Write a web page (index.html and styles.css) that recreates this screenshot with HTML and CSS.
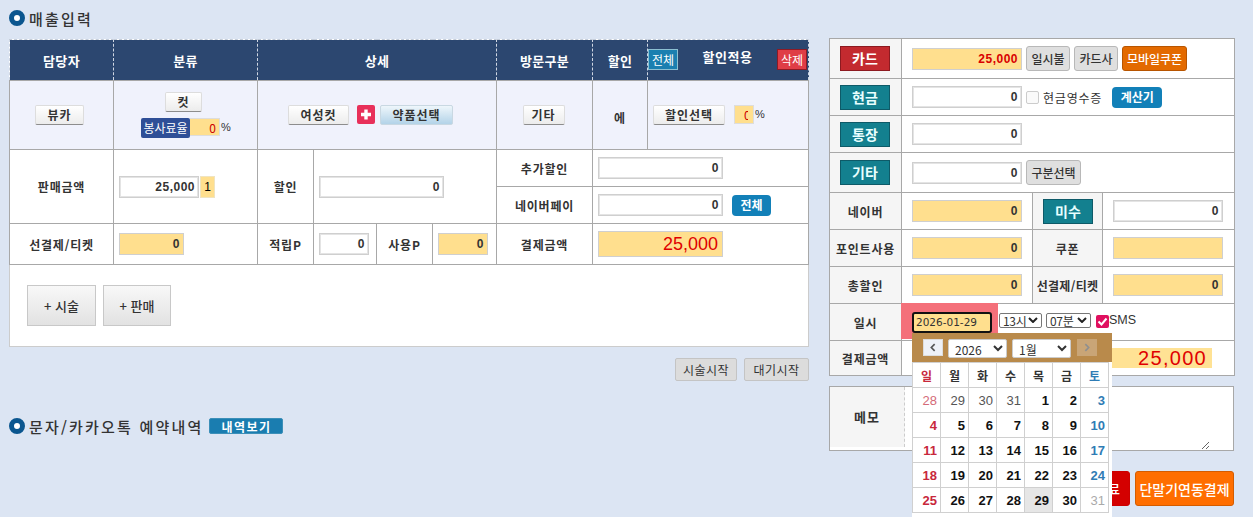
FILE: index.html
```html
<!DOCTYPE html>
<html lang="ko">
<head>
<meta charset="utf-8">
<title>매출입력</title>
<link rel="stylesheet" href="styles.css">
</head>
<body>
<div class="page">
  <main class="left">
    <h2 class="title"><span class="dot"></span>매출입력</h2>
    <table class="sales">
      <colgroup>
        <col class="c1"><col class="c2"><col class="c3"><col class="c4"><col class="c5"><col class="c6"><col class="c7"><col class="c8"><col class="c9">
      </colgroup>
      <tr class="r-head">
        <th>담당자</th><th>분류</th><th colspan="4">상세</th><th>방문구분</th><th>할인</th>
        <th><div class="head-apply"><button class="tag tag-blue">전체</button><span>할인적용</span><button class="tag tag-red">삭제</button></div></th>
      </tr>
      <tr class="r-pick">
        <td><button class="btn-w b-49">뷰카</button></td>
        <td>
          <button class="btn-w b-37">컷</button>
          <div class="rate"><span class="rate-label">봉사료율</span><input class="rate-input" value="0"><span class="pct">%</span></div>
        </td>
        <td colspan="4">
          <div class="detail">
            <button class="btn-w b-61">여성컷</button>
            <svg class="plus" viewBox="0 0 18 19"><rect width="18" height="19" rx="2" fill="#e8305a"/><path d="M9 4.5v10M4 9.500h10" stroke="#fff" stroke-width="3.400"/></svg>
            <button class="btn-b">약품선택</button>
          </div>
        </td>
        <td><button class="btn-w b-42">기타</button></td>
        <td class="lbl low">에</td>
        <td>
          <div class="apply"><button class="btn-w b-72">할인선택</button><input class="pct-input" value="0"><span class="pct">%</span></div>
        </td>
      </tr>
      <tr class="r-half">
        <td rowspan="2" class="lbl">판매금액</td>
        <td rowspan="2"><div class="price"><input class="inp w-80" value="25,000"><input class="qty" value="1"></div></td>
        <td rowspan="2" class="lbl">할인</td>
        <td rowspan="2" colspan="3" class="pad"><input class="inp w-125" value="0"></td>
        <td class="lbl">추가할인</td>
        <td colspan="2" class="pad"><input class="inp w-125" value="0"></td>
      </tr>
      <tr class="r-half">
        <td class="lbl">네이버페이</td>
        <td colspan="2" class="pad"><div class="naver"><input class="inp w-125" value="0"><button class="btn-all">전체</button></div></td>
      </tr>
      <tr class="r-pay">
        <td class="lbl">선결제/티켓</td>
        <td class="pad"><input class="inp yel w-65" value="0"></td>
        <td class="lbl">적립P</td>
        <td class="pad"><input class="inp w-50" value="0"></td>
        <td class="lbl">사용P</td>
        <td class="pad"><input class="inp yel w-50" value="0"></td>
        <td class="lbl">결제금액</td>
        <td colspan="2" class="pad"><input class="inp yel w-125 big" value="25,000"></td>
      </tr>
      <tr class="r-add">
        <td colspan="9"><div class="adds"><button class="btn-add a-69">+ 시술</button><button class="btn-add a-68">+ 판매</button></div></td>
      </tr>
    </table>
    <div class="starts"><button class="btn-g s-62">시술시작</button><button class="btn-g s-65">대기시작</button></div>
    <h2 class="title title-2"><span class="dot"></span>문자/카카오톡 예약내역<button class="btn-log">내역보기</button></h2>
  </main>

  <aside class="right">
    <table class="payment">
      <colgroup><col class="p1"><col class="p2"><col class="p3"><col class="p4"></colgroup>
      <tr class="h-40">
        <td class="side"><button class="pay-btn red">카드</button></td>
        <td colspan="3" class="pad-10"><div class="line"><input class="inp yel w-110 redtxt" value="25,000"><button class="btn-soft w-44">일시불</button><button class="btn-soft w-44">카드사</button><button class="btn-orange">모바일쿠폰</button></div></td>
      </tr>
      <tr class="h-37">
        <td class="side"><button class="pay-btn">현금</button></td>
        <td colspan="3" class="pad-10"><div class="line"><input class="inp w-110" value="0"><span class="check"></span><span class="receipt">현금영수증</span><button class="btn-calc">계산기</button></div></td>
      </tr>
      <tr class="h-37">
        <td class="side"><button class="pay-btn">통장</button></td>
        <td colspan="3" class="pad-10"><input class="inp w-110" value="0"></td>
      </tr>
      <tr class="h-40">
        <td class="side"><button class="pay-btn">기타</button></td>
        <td colspan="3" class="pad-10"><div class="line"><input class="inp w-110" value="0"><button class="btn-soft w-55">구분선택</button></div></td>
      </tr>
      <tr class="h-37">
        <td class="side lbl">네이버</td><td class="pad-10"><input class="inp yel w-110" value="0"></td>
        <td class="side"><button class="pay-btn">미수</button></td><td class="pad-10"><input class="inp w-110" value="0"></td>
      </tr>
      <tr class="h-37">
        <td class="side lbl">포인트사용</td><td class="pad-10"><input class="inp yel w-110" value="0"></td>
        <td class="side lbl">쿠폰</td><td class="pad-10"><input class="inp yel w-110" value=""></td>
      </tr>
      <tr class="h-37">
        <td class="side lbl">총할인</td><td class="pad-10"><input class="inp yel w-110" value="0"></td>
        <td class="side lbl tight">선결제/티켓</td><td class="pad-10"><input class="inp yel w-110" value="0"></td>
      </tr>
      <tr class="h-37">
        <td class="side lbl">일시</td>
        <td colspan="3" class="pad-10">
          <div class="line date-line">
            <span class="date-wrap"><input class="date" value="2026-01-29"></span>
            <span class="sel s-43">13시<svg class="chev" viewBox="0 0 10 6"><path d="M1 1l4 4 4-4" fill="none" stroke="#222" stroke-width="2"/></svg></span>
            <span class="sel s-45">07분<svg class="chev" viewBox="0 0 10 6"><path d="M1 1l4 4 4-4" fill="none" stroke="#222" stroke-width="2"/></svg></span>
            <span class="sms-check"><svg viewBox="0 0 13 13"><path d="M2.500 6.500l3 3 5-6" fill="none" stroke="#fff" stroke-width="2"/></svg></span><span class="sms">SMS</span>
          </div>
        </td>
      </tr>
      <tr class="h-35">
        <td class="side lbl">결제금액</td>
        <td colspan="3" class="pad-10"><div class="total"><span class="total-val">25,000</span></div></td>
      </tr>
    </table>

    <div class="memo">
      <div class="memo-label">메모</div>
      <textarea class="memo-text"></textarea>
    </div>

    <div class="finals"><button class="btn-done">료</button><button class="btn-term">단말기연동결제</button></div>

    <div class="cal">
      <div class="cal-head">
        <button class="cal-nav"><svg viewBox="0 0 20 18"><path d="M12 5l-4 4 4 4" fill="none" stroke="#555" stroke-width="2"/></svg></button>
        <select class="cal-sel"><option>2026</option></select>
        <select class="cal-sel"><option>1월</option></select>
        <button class="cal-nav off"><svg viewBox="0 0 20 18"><path d="M8 5l4 4-4 4" fill="none" stroke="#8f8f8f" stroke-width="2"/></svg></button>
      </div>
      <table class="cal-grid">
        <tr class="cal-w"><th class="sun">일</th><th>월</th><th>화</th><th>수</th><th>목</th><th>금</th><th class="sat">토</th></tr>
        <tr><td class="sun dim">28</td><td class="dim">29</td><td class="dim">30</td><td class="dim">31</td><td>1</td><td>2</td><td class="sat">3</td></tr>
        <tr><td class="sun">4</td><td>5</td><td>6</td><td>7</td><td>8</td><td>9</td><td class="sat">10</td></tr>
        <tr><td class="sun">11</td><td>12</td><td>13</td><td>14</td><td>15</td><td>16</td><td class="sat">17</td></tr>
        <tr><td class="sun">18</td><td>19</td><td>20</td><td>21</td><td>22</td><td>23</td><td class="sat">24</td></tr>
        <tr><td class="sun">25</td><td>26</td><td>27</td><td>28</td><td class="today">29</td><td>30</td><td class="off-day">31</td></tr>
      </table>
    </div>
  </aside>
</div>
</body>
</html>
```
FILE: styles.css
```css
* { box-sizing: border-box; }
html, body { margin: 0; height: 517px; overflow: hidden; }
body { background: #dce5f3; font-family: "Noto Sans CJK KR", "Liberation Sans", sans-serif; font-size: 12px; color: #333; }
button, input, select, textarea { font-family: inherit; margin: 0; }
button { padding: 0; cursor: pointer; }

.page { display: flex; align-items: flex-start; padding-left: 9px; }
.left { width: 800px; }
.right { width: 405px; margin-left: 20px; margin-top: 38px; position: relative; }

.title { display: flex; align-items: center; margin: 0; padding-top: 9px; height: 39px; padding-bottom: 12px; font-size: 15px; font-weight: 500; letter-spacing: 2.200px; color: #333; }
.dot { width: 16px; height: 16px; border-radius: 50%; border: 5px solid #0b568f; background: #fff; margin-right: 4px; flex: none; }
.title-2 { margin-top: 36px; padding: 0; height: 18px; }

table { border-collapse: collapse; table-layout: fixed; }
.sales { width: 800px; background: #fff; }
.sales td, .sales th { border: 1px solid #a8a8a8; padding: 0; text-align: center; }
.c1 { width: 104px; } .c2 { width: 144px; } .c3 { width: 56px; } .c4 { width: 63px; } .c5 { width: 56px; }
.c6 { width: 64px; } .c7 { width: 96px; } .c8 { width: 55px; } .c9 { width: 161px; }

.r-head { height: 41px; }
.sales .r-head th { background: #2c4770; color: #fff; font-size: 13px; font-weight: 700; letter-spacing: .3px; border: 1px dashed #cfd6e2; border-top-color: #c5cdd9; }
.r-pick { height: 69px; }
.r-pick td { background: #f0f2fc; }
.r-half { height: 37px; }
.r-pay { height: 41px; }
.r-add { height: 82px; }
.sales .r-add td { border-color: #ccc; text-align: left; border-top-color: #a8a8a8; }

.lbl { font-size: 12px; font-weight: 700; letter-spacing: .8px; color: #333; }
.low { padding-top: 4px !important; }
.pad { text-align: left !important; padding-left: 5px !important; }

.head-apply { display: flex; align-items: center; justify-content: space-between; height: 39px; padding: 0 1px 2px 0; }
.head-apply span { font-size: 13px; letter-spacing: .5px; margin-top: -5px; }
.tag { width: 30px; height: 21px; color: #fff; font-size: 12px; line-height: 17px; }
.tag-blue { background: #1b7fb0; border: 1px solid #8cc0d2; }
.tag-red { background: #df3d46; border: 1px solid #8e1a25; }

.btn-w { height: 20px; background: linear-gradient(#fff, #ececec); border: 1px solid #ddd; border-bottom: 1px solid #8d8d8d; border-radius: 2px; font-size: 12px; font-weight: 700; letter-spacing: 1px; color: #333; line-height: 16px; }
.b-49 { width: 49px; margin-right: 4px; } .b-37 { width: 37px; display: block; margin: 0 auto 6px; position: relative; left: -2px; } .b-61 { width: 61px; } .b-42 { width: 42px; margin-right: 2px; } .b-72 { width: 72px; }
.rate { display: flex; align-items: flex-start; justify-content: flex-start; padding-left: 27px; }
.rate-label { width: 49px; height: 20px; background: #2f4f97; color: #fff; border-radius: 2px; font-size: 12px; line-height: 19px; text-align: center; }
.rate-input { width: 30px; height: 18px; border: 1px solid #ddd; border-width: 1px 1px 1px 0; background: #ffdf8e; color: #c00; text-align: right; font-size: 12px; padding: 0 3px; }
.pct { font-size: 11px; font-family: "Liberation Sans", sans-serif; margin: 3px 0 0 1px; }
.detail { display: flex; justify-content: flex-start; align-items: flex-start; padding-left: 30px; }
.plus { width: 18px; height: 19px; margin: 0 5px 0 8px; }
.btn-b { width: 73px; height: 20px; background: linear-gradient(#eef6fb, #b3d3e8); border: 1px solid #c9d8e2; border-radius: 2px; font-size: 12px; font-weight: 700; letter-spacing: 1px; color: #333; line-height: 16px; }
.apply { display: flex; align-items: flex-start; padding-left: 5px; }
.pct-input { width: 20px; height: 19px; margin-left: 9px; border: 1px solid #ddd; background: #ffdf8e; color: #c00; font-size: 12px; padding: 0 5px 0 9px; text-align: left; }

.inp { height: 22px; border: 1px solid #cfcfcf; outline: 1px solid #e4e4e4; outline-offset: -2px; background: #fff; text-align: right; font-size: 12px; font-weight: 700; color: #333; padding: 0 3px 0 5px; display: block; font-family: "Liberation Sans", sans-serif; letter-spacing: .5px; }
.yel { background: #ffdf8e; outline-color: #ffdf8e; }
.w-80 { width: 80px; } .w-125 { width: 125px; } .w-65 { width: 65px; } .w-50 { width: 50px; } .w-110 { width: 110px; }
.big { height: 26px; font-size: 18px; font-weight: 400; color: #e00000; padding-right: 4px; letter-spacing: 0; }
.redtxt { color: #d80000; }
.price { display: flex; padding-left: 5px; }
.qty { width: 15px; height: 22px; border: 1px solid #f0e4c0; background: #ffdf8e; font-size: 12px; text-align: center; padding: 0; margin-left: 1px; font-family: "Liberation Sans", sans-serif; }
.naver { display: flex; align-items: center; }
.btn-all { width: 39px; height: 21px; margin-left: 9px; background: #1280b8; border: 0; border-radius: 4px; color: #fff; font-size: 12px; font-weight: 700; line-height: 20px; }

.adds { display: flex; gap: 7px; padding: 0 0 1px 17px; }
.btn-add { height: 41px; background: linear-gradient(#f8f8f8, #e2e2e2); border: 1px solid #c8c8c8; font-size: 13px; color: #333; font-weight: 500; }
.a-69 { width: 69px; } .a-68 { width: 68px; }

.starts { display: flex; justify-content: flex-end; gap: 7px; margin: 11px 0 0 0; }
.btn-g { height: 23px; background: #dcdcdc; border: 1px solid #c4c4c4; border-radius: 2px; font-size: 12px; letter-spacing: .5px; color: #333; line-height: 19px; }
.s-62 { width: 62px; } .s-65 { width: 65px; }
.btn-log { width: 74px; height: 16px; margin-left: 6px; background: #1a7db0; border: 1px solid #3c8fb8; border-radius: 2px; color: #fff; font-size: 12px; font-weight: 700; letter-spacing: 1.500px; line-height: 13px; }

.payment { width: 405px; background: #fff; }
.payment td { border: 1px solid #a8a8a8; padding: 0; text-align: center; }
.p1 { width: 72px; } .p2 { width: 131px; } .p3 { width: 70px; } .p4 { width: 132px; }
.h-40 { height: 40px; } .h-37 { height: 37px; } .h-35 { height: 35px; }
.side { background: #f5f5f5; }
.payment .tight { letter-spacing: .3px; }
.payment .pad-10 { text-align: left; padding-left: 10px; }
.pay-btn { display: block; margin: 0 0 0 10px; width: 50px; height: 25px; background: #13808f; border: 1px solid #0e5a68; color: #e8ffff; font-size: 14px; font-weight: 700; line-height: 21px; }
.pay-btn.red { background: #c32a2f; border-color: #8d1a20; color: #fff; }
.line { display: flex; align-items: center; }
.btn-soft { height: 25px; margin-left: 4px; background: #dfdfdf; border: 1px solid #b8b8b8; border-radius: 3px; font-size: 12px; color: #333; line-height: 21px; font-weight: 500; }
.w-44 { width: 44px; } .w-55 { width: 55px; }
.btn-orange { width: 65px; height: 25px; margin-left: 4px; background: #e36a00; border: 1px solid #b85500; border-radius: 3px; color: #fff; font-size: 12px; font-weight: 500; line-height: 21px; }
.check { width: 13px; height: 13px; margin-left: 4px; border: 1px solid #ccc; border-radius: 2px; background: #fafafa; }
.receipt { margin-left: 4px; font-size: 12px; letter-spacing: .8px; }
.btn-calc { width: 50px; height: 21px; margin-left: 10px; background: #1280b8; border: 0; border-radius: 4px; color: #fff; font-size: 12px; font-weight: 700; line-height: 20px; }

.date-line { height: 22px; }
.date-wrap { display: block; position: relative; isolation: isolate; }
.date-wrap::before { content: ""; position: absolute; inset: -9px -6px -6px -11px; background: #f4707a; z-index: -1; }
.date { display: block; position: relative; width: 80px; height: 21px; background: #ffdf8e; border: 2px solid #111; border-radius: 3px; padding: 0 2px; color: #333; font-family: "DejaVu Sans", sans-serif; font-size: 10.500px; outline: 0; }
.sel { display: flex; align-items: center; justify-content: space-between; height: 15px; margin: -4px 0 0 4px; padding: 0 3px 0 3px; border: 1px solid #777; border-radius: 2px; background: #fff; font-size: 12px; color: #333; line-height: 13px; letter-spacing: -.3px; }
.date-wrap + .sel { margin-left: 7px; }
.s-43 { width: 43px; } .s-45 { width: 45px; }
.chev { width: 10px; height: 6px; flex: none; }
.sms-check { width: 13px; height: 13px; margin: -2px 0 0 5px; background: #e0105f; border-radius: 2px; display: block; }
.sms-check svg { display: block; }
.sms { font-family: "Liberation Sans", sans-serif; font-size: 12.500px; margin-top: -4px; }
.total { display: flex; justify-content: flex-end; padding-right: 22px; }
.total-val { width: 110px; height: 20px; background: #ffe294; color: #e00000; text-align: right; font-family: "Liberation Sans", sans-serif; font-size: 20px; line-height: 20px; letter-spacing: 1.300px; padding-right: 5px; }

.memo { display: flex; height: 65px; margin-top: 10px; border: 1px solid #a8a8a8; background: #fff; }
.memo-label { width: 75px; height: 60px; background: #f5f5f5; border-right: 1px dashed #ccc; font-size: 13px; font-weight: 700; letter-spacing: 1px; text-align: center; line-height: 60px; }
.memo-text { width: 305px; border: 0; background: #fff; outline: 0; resize: vertical; height: 63px; }

.finals { display: flex; justify-content: flex-end; gap: 5px; margin-top: 20px; }
.btn-done { width: 70px; height: 35px; background: #d40000; border: 1px solid #c00; border-radius: 3px; color: #fff; font-size: 13px; font-weight: 500; text-align: right; padding-right: 9px; }
.btn-term { width: 99px; height: 35px; background: #ff6e00; border: 1px solid #d45c00; border-radius: 3px; color: #fff; font-size: 14px; font-weight: 500; }

.cal { position: absolute; left: 83px; top: 295px; width: 200px; height: 200px; background: #fff; }
.cal-head { display: flex; align-items: flex-start; height: 29px; padding: 6px 0 0 11px; background: #b98a4b; }
.cal-nav { width: 20px; height: 17px; background: #eef1f7; border: 1px solid #ddd; display: block; }
.cal-nav svg { display: block; width: 18px; height: 15px; }
.cal-nav.off { background: #c9a577; border-color: #c9a577; margin-left: 6px; }
.cal-sel { width: 59px; height: 19px; margin-left: 5px; border: 1px solid #ccc; background: #fff; font-size: 12px; padding: 0 2px; color: #333; border-radius: 2px; }
.cal-grid { width: 197px; margin-top: 0; }
.cal-grid td, .cal-grid th { width: 28px; height: 25px; border: 1px solid #d0d0d0; padding: 0 3px 0 0; text-align: right; font-size: 13px; font-weight: 700; color: #111; font-family: "Liberation Sans", sans-serif; }
.cal-grid th { text-align: center; padding: 0; font-size: 12px; font-family: "Noto Sans CJK KR", sans-serif; color: #333; }
.cal-grid .sun { color: #c8283c; }
.cal-grid .sat { color: #2f7cb5; }
.cal-grid .dim { font-weight: 400; color: #555; }
.cal-grid .sun.dim { color: #d46a78; }
.cal-grid .off-day { font-weight: 400; color: #aaa; }
.cal-grid .today { background: #e6e6e6; }
```
